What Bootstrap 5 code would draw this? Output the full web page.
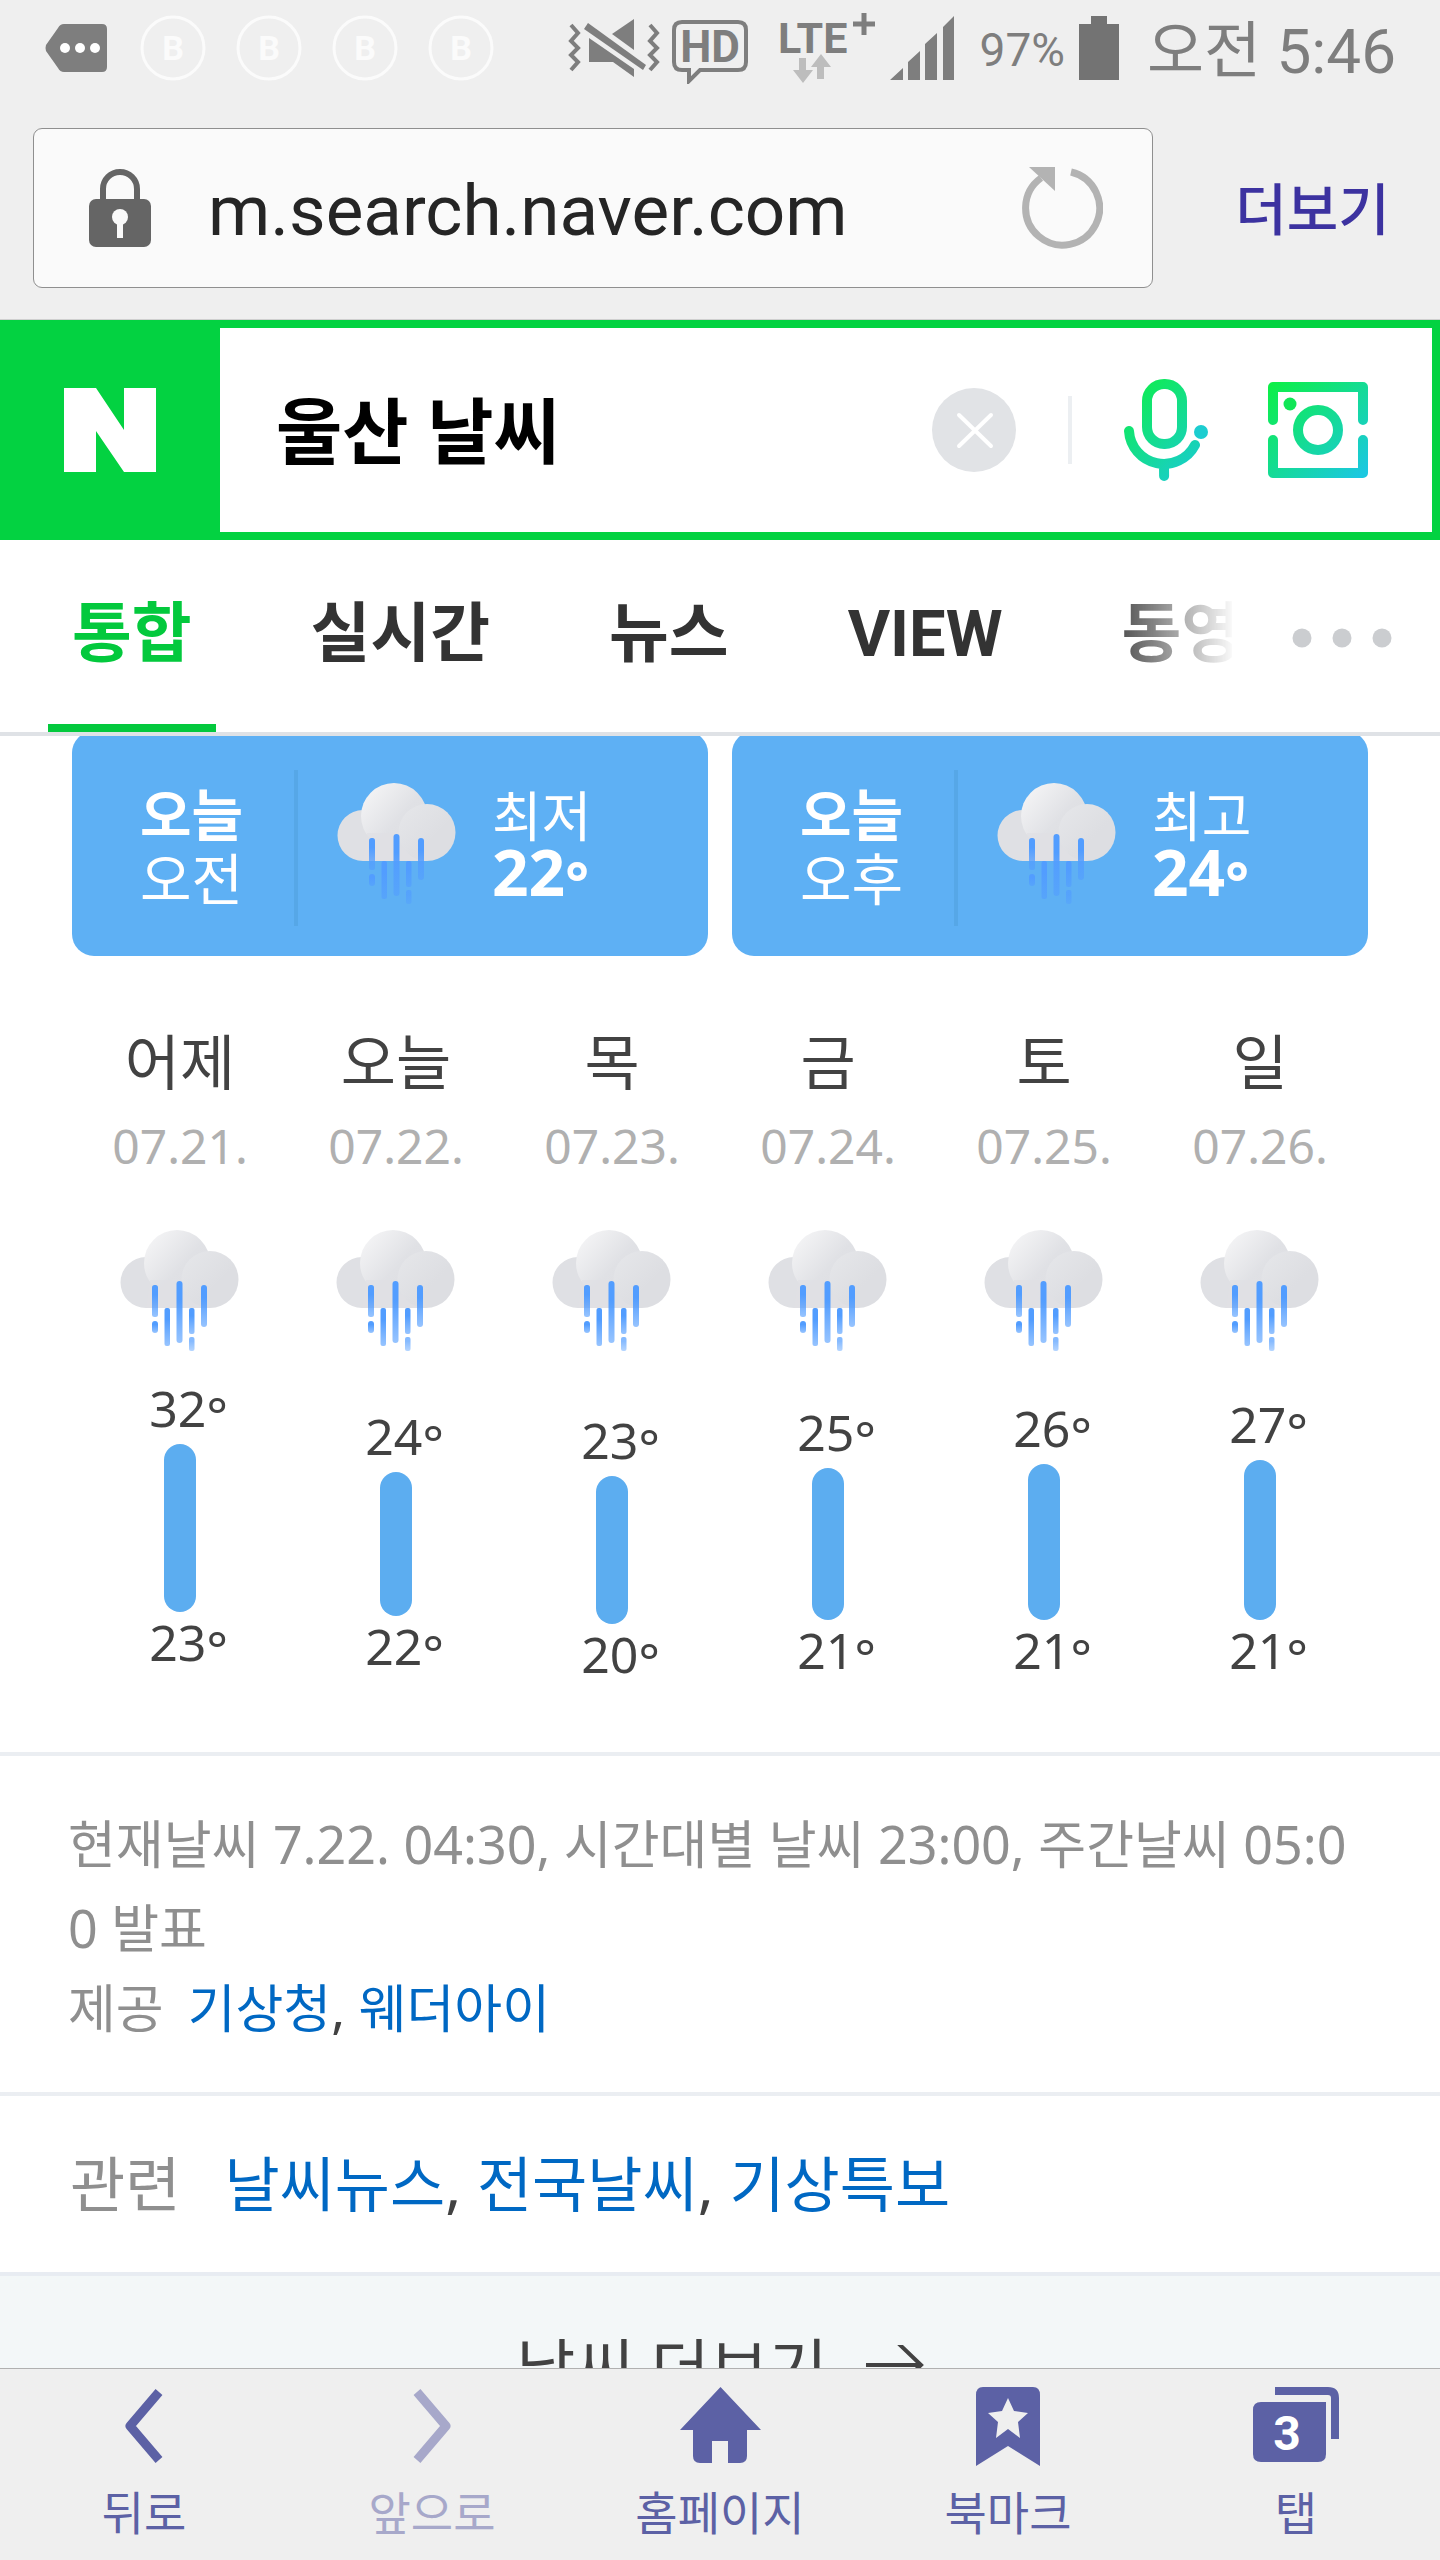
<!DOCTYPE html>
<html lang="ko">
<head>
<meta charset="utf-8">
<meta name="viewport" content="width=device-width, initial-scale=1">
<title>울산 날씨</title>
<link href="https://cdn.jsdelivr.net/npm/bootstrap@5.3.0/dist/css/bootstrap.min.css" rel="stylesheet">
<style>
  :root { --ui: Roboto, "Noto Sans CJK KR", sans-serif; --page: "Noto Sans", "Noto Sans CJK KR", sans-serif; }
  body { font-family: var(--page); color: #424242; background: #fff; }
  svg { display: block; flex-shrink: 0; }
  a { text-decoration: none; }

  /* browser chrome */
  .chrome { background: #efefef; border-bottom: 1px solid #cfcfcf; font-family: var(--ui); }
  .status { height: 96px; padding: 0 44px 0 45px; color: #7e7e7e; }
  .status-left { gap: 28px; }
  .hd-icon { margin-top: 8px; }
  .lte-icon { margin: 0 14px 0 30px; }
  .battery-level { font-size: 46px; margin: 4px 14px 0 26px; line-height: 1; }
  .clock { font-size: 62px; margin: 8px 0 0 28px; line-height: 1; }
  .address-row { padding: 32px 0 31px 33px; }
  .address { height: 160px; background: #fafafa; border: 1px solid #8f8f8f; border-radius: 9px; padding: 0 49px 0 55px; }
  .address input { font-size: 71px; color: #252525; padding: 6px 0 0 57px; line-height: 80px; }
  .more-btn { width: 287px; flex: none; padding: 6px 0 0 32px; font-size: 56px; font-weight: 500; color: #3c32a0; line-height: 80px; }
  .more-btn:hover { color: #3c32a0; }

  /* search header */
  .search { height: 220px; border: 8px solid #03d241; border-left: 0; }
  .search-logo { width: 220px; flex: none; margin: -8px 0; background: #03d241; }
  .search input { font-family: var(--page); font-size: 72px; font-weight: 700; color: #000; padding: 0 0 0 56px; line-height: 100px; }
  .search-tools { flex: none; padding-right: 64px; }
  .tool-sep { width: 4px; height: 68px; background: #eceff2; margin: 0 52px; }
  .lens-btn { margin-left: 60px; }
  .tabs { height: 196px; border-bottom: 4px solid #dfe2e6; font-family: var(--ui); }
  .tab-list { width: 1232px; gap: 71px; padding-left: 48px; -webkit-mask-image: linear-gradient(90deg, #000 1100px, transparent 1236px); mask-image: linear-gradient(90deg, #000 1100px, transparent 1236px); }
  .tab-list a { flex: none; padding: 0 24px 4px; font-size: 65px; font-weight: 700; line-height: 188px; color: #333; }
  .tab-list a.active { color: #03c93d; box-shadow: inset 0 -8px 0 #03c93d; }
  .tab-more { padding: 4px 48px 0 0; }

  /* weather */
  .halves { gap: 24px; padding: 0 72px; margin-top: -5px; }
  .half { flex: 1; height: 225px; background: #5eb0f4; color: #fff; border-radius: 22px; padding: 8px 0 0 68px; }
  .half-when { width: 154px; font-size: 56px; line-height: 64px; margin-bottom: 4px; }
  .half-when strong { font-weight: 700; }
  .half-sep { width: 4px; height: 156px; margin-right: 39px; background: #56a7e7; }
  .half-temp { font-size: 54px; line-height: 56px; margin: 0 0 8px 35px; }
  .half-temp strong { display: block; font-size: 64px; }
  .half-temp span { display: block; }
  .deg { vertical-align: -7px; line-height: 0; }
  .week { margin: 0; padding: 74px 72px 68px; list-style: none; }
  .week li { flex: 1; }
  .day { font-size: 60px; line-height: 64px; }
  .date { font-size: 48px; line-height: 60px; color: #b0b0b0; margin: 22px 0 54px; }
  .temp { font-size: 50px; line-height: 60px; padding-left: 17px; }
  .temp .deg { font-size: 50px; }
  .temp-bar { width: 32px; border-radius: 16px; background: #5cadf0; margin-top: 6px; }
  .line-top { border-top: 4px solid #ebeef2; }
  .info { padding: 46px 70px 46px 68px; font-size: 52px; color: #8f8f8f; }
  .info p { line-height: 84px; word-break: break-all; margin: 0; }
  .info .source { line-height: 76px; color: #424242; }
  .info a, .related a { color: #0068c3; }
  .source-label { color: #8f8f8f; margin-right: 24px; }
  .related { padding: 48px 70px; font-size: 60px; line-height: 80px; }
  .related-label { color: #8f8f8f; margin-right: 44px; }
  .more-link { background: #f3f7f8; border-top: 4px solid #e8ecf2; padding: 52px 0; font-size: 64px; line-height: 80px; color: #424242; gap: 38px; }

  /* toolbar */
  .toolbar { background: #efefef; border-top: 1px solid #b0b0b0; font-family: var(--ui); }
  .toolbar .btn { padding: 18px 0 16px; color: #5c61a5; font-size: 46px; line-height: 60px; border: 0; }
  .toolbar .btn:disabled { color: #a7a8ca; opacity: 1; }
  .toolbar svg { height: 79px; margin-bottom: 18px; }
</style>
</head>
<body>
<svg width="0" height="0" class="position-absolute" aria-hidden="true">
  <defs>
    <linearGradient id="puffA" x1="0" y1="0.1" x2="0.9" y2="0.9"><stop offset="0" stop-color="#f6f6f7"/><stop offset="0.6" stop-color="#e0e1e5"/><stop offset="1" stop-color="#dddee2"/></linearGradient>
    <linearGradient id="puffB" x1="0" y1="0" x2="0.6" y2="0.6"><stop offset="0" stop-color="#e6e7ea"/><stop offset="1" stop-color="#dddee2"/></linearGradient>
    <linearGradient id="drop" x1="0" y1="0" x2="0" y2="1"><stop offset="0.3" stop-color="#529dff"/><stop offset="1" stop-color="#529dff" stop-opacity="0.6"/></linearGradient>
    <linearGradient id="naver" gradientUnits="userSpaceOnUse" x1="0" y1="0" x2="90" y2="96"><stop offset="0" stop-color="#0df043"/><stop offset="1" stop-color="#1bc8e0"/></linearGradient>
    <symbol id="badge-b" viewBox="0 0 68 68"><circle cx="34" cy="34" r="31" fill="none" stroke="#fbfbfb" stroke-width="3"/><text x="34" y="46" text-anchor="middle" font-size="34" font-weight="700" fill="#fbfbfb">B</text></symbol>
    <symbol id="rain" viewBox="0 0 120 130">
      <path d="M26 27a25.500 25.500 0 0 0 0 51H90V40H40z" fill="#dfe0e4"/>
      <circle cx="57" cy="33" r="33" fill="url(#puffA)"/>
      <path d="M30 50H90V78H26z" fill="#dfe0e4" opacity="0.700"/>
      <circle cx="90" cy="49.500" r="28.500" fill="url(#puffB)"/>
      <g fill="url(#drop)"><rect x="32" y="55" width="6" height="32" rx="2.500"/><rect x="32" y="91" width="6" height="12" rx="3"/><rect x="44.500" y="78" width="5.500" height="38" rx="2"/><rect x="56.500" y="51" width="6" height="62" rx="3"/><rect x="69" y="78" width="5.500" height="26" rx="2"/><rect x="69" y="107" width="5.500" height="14" rx="2" opacity="0.700"/><rect x="81" y="55" width="6" height="42" rx="3"/></g>
    </symbol>
  </defs>
</svg>

<div class="vh-100 d-flex flex-column overflow-hidden">
  <header class="chrome">
    <div class="status d-flex align-items-center">
      <div class="status-left d-flex align-items-center">
        <svg width="66" height="48" viewBox="0 0 66 48"><path d="M19 0H57q5 0 5 5V43q0 5-5 5H19q-4 0-6-4L1 27q-1-3 0-6L13 4q2-4 6-4z" fill="#7e7e7e"/><g fill="#fff"><circle cx="20" cy="24" r="5"/><circle cx="35" cy="24" r="5"/><circle cx="50" cy="24" r="5"/></g></svg>
        <svg width="68" height="68"><use href="#badge-b"/></svg>
        <svg width="68" height="68"><use href="#badge-b"/></svg>
        <svg width="68" height="68"><use href="#badge-b"/></svg>
        <svg width="68" height="68"><use href="#badge-b"/></svg>
      </div>
      <div class="d-flex align-items-center ms-auto">
        <svg class="me-2" width="96" height="60" viewBox="0 0 96 60" role="img" aria-label="무음"><g fill="none" stroke="#7e7e7e" stroke-width="4"><path id="zig" d="M3 7L10 15L3 23L10 30L3 37L10 44L3 52"/><use href="#zig" x="79"/></g><g fill="#7e7e7e"><path d="M44 16L66 1V32z"/><path d="M21 20V44H45L66 59V51z"/><path d="M20 5L78 47L75 52L16 11z"/></g></svg>
        <svg class="hd-icon" width="76" height="64" viewBox="0 0 76 64"><path d="M10 2H66q8 0 8 8V42q0 8-8 8H28L17 61V50H10q-8 0-8-8V10q0-8 8-8z" fill="none" stroke="#7e7e7e" stroke-width="4"/><text x="38" y="42" text-anchor="middle" font-size="44" font-weight="700" fill="#7e7e7e">HD</text></svg>
        <svg class="lte-icon" width="98" height="72" viewBox="0 0 98 72"><text x="0" y="41" font-size="43" font-weight="700" fill="#7e7e7e">LTE</text><path d="M86 1V23M75 12H97" stroke="#7e7e7e" stroke-width="5"/><path d="M21 46V58H15L25 71L35 58H28V46zM39 67V55H33L43 42L53 55H46V67z" fill="#bdbdbd"/></svg>
        <svg width="64" height="64" viewBox="0 0 64 64"><path d="M0 64L13 52V64zM18 46L30 35V64H18zM35 28L47 17V64H35zM53 11L64 0V64H53z" fill="#7e7e7e"/></svg>
        <span class="battery-level">97%</span>
        <svg width="40" height="64" viewBox="0 0 40 64"><path d="M0 8H12V0H28V8H40V64H0z" fill="#737373"/></svg>
        <span class="clock">오전 5:46</span>
      </div>
    </div>
    <div class="address-row d-flex align-items-center">
      <div class="address d-flex align-items-center flex-grow-1">
        <svg width="62" height="78" viewBox="0 0 62 78"><path d="M14 32V20a17 17 0 0 1 34 0V32" fill="none" stroke="#656565" stroke-width="6"/><rect y="30" width="62" height="48" rx="7" fill="#656565"/><circle cx="31" cy="48" r="8" fill="#fafafa"/><path d="M31 50V69" stroke="#fafafa" stroke-width="6"/></svg>
        <input class="form-control border-0 bg-transparent shadow-none" type="text" value="m.search.naver.com" aria-label="주소">
        <button class="btn p-0 border-0" type="button" aria-label="새로고침"><svg width="82" height="84" viewBox="0 0 82 84"><path d="M50 6A37 37 0 1 1 20 12" fill="none" stroke="#b3b3b3" stroke-width="7"/><path d="M8 1H34V25z" fill="#b3b3b3"/></svg></button>
      </div>
      <button class="more-btn btn border-0" type="button">더보기</button>
    </div>
  </header>

  <form class="search d-flex flex-shrink-0" role="search" onsubmit="return false">
    <a class="search-logo d-flex align-items-center justify-content-center" href="#" aria-label="네이버"><svg width="92" height="84" viewBox="0 0 92 84"><path d="M0 0H32L60 42V0H92V84H60L32 43V84H0z" fill="#fff"/></svg></a>
    <input class="form-control border-0 shadow-none flex-grow-1" type="text" value="울산 날씨" aria-label="검색어">
    <div class="search-tools d-flex align-items-center">
      <button class="btn p-0 border-0" type="reset" aria-label="지우기"><svg width="84" height="84" viewBox="0 0 84 84"><circle cx="42" cy="42" r="42" fill="#e1e3e6"/><path d="M27 27L59 58M59 27L27 58" stroke="#fff" stroke-width="4" stroke-linecap="round"/></svg></button>
      <div class="tool-sep"></div>
      <button class="btn p-0 border-0" type="button" aria-label="음성검색"><svg width="84" height="102" viewBox="0 0 84 102"><g fill="none" stroke="url(#naver)" stroke-width="10" stroke-linecap="round"><rect x="23" y="5" width="35" height="60" rx="17"/><path d="M5 52A35 35 0 0 0 71 66M40 86L40.100 97"/></g><circle cx="77" cy="53" r="7" fill="#1ccdd0"/></svg></button>
      <button class="lens-btn btn p-0 border-0" type="button" aria-label="렌즈"><svg width="100" height="96" viewBox="0 0 100 96"><g fill="none" stroke="url(#naver)" stroke-width="10" stroke-linecap="round" stroke-linejoin="round"><path d="M5 38V5H95V38M5 58V91H95V58"/><circle cx="50" cy="48" r="20"/></g><circle cx="22" cy="22" r="6.500" fill="#11e656"/></svg></button>
    </div>
  </form>

  <div class="tabs d-flex flex-shrink-0 align-items-center justify-content-between">
    <nav class="tab-list d-flex overflow-hidden" aria-label="검색 탭">
      <a class="active" href="#">통합</a><a href="#">실시간</a><a href="#">뉴스</a><a href="#">VIEW</a><a href="#">동영상</a>
    </nav>
    <button class="tab-more btn border-0" type="button" aria-label="탭 더보기"><svg width="100" height="20" viewBox="0 0 100 20" fill="#cbcdd0"><circle cx="10" cy="10" r="9.500"/><circle cx="50" cy="10" r="9.500"/><circle cx="90" cy="10" r="9.500"/></svg></button>
  </div>

  <main class="flex-grow-1 overflow-hidden">
    <section class="halves d-flex">
      <div class="half d-flex align-items-center">
        <div class="half-when"><strong>오늘</strong><br>오전</div><div class="half-sep"></div>
        <svg width="120" height="130"><use href="#rain"/></svg>
        <div class="half-temp"><span>최저</span><strong>22<small class="deg">°</small></strong></div>
      </div>
      <div class="half d-flex align-items-center">
        <div class="half-when"><strong>오늘</strong><br>오후</div><div class="half-sep"></div>
        <svg width="120" height="130"><use href="#rain"/></svg>
        <div class="half-temp"><span>최고</span><strong>24<small class="deg">°</small></strong></div>
      </div>
    </section>

    <ul class="week d-flex">
      <li class="d-flex flex-column align-items-center"><span class="day">어제</span><span class="date">07.21.</span><svg width="120" height="130"><use href="#rain"/></svg><span class="temp" style="margin-top:18px">32<small class="deg">°</small></span><div class="temp-bar" style="height:168px"></div><span class="temp">23<small class="deg">°</small></span></li>
      <li class="d-flex flex-column align-items-center"><span class="day">오늘</span><span class="date">07.22.</span><svg width="120" height="130"><use href="#rain"/></svg><span class="temp" style="margin-top:46px">24<small class="deg">°</small></span><div class="temp-bar" style="height:144px"></div><span class="temp">22<small class="deg">°</small></span></li>
      <li class="d-flex flex-column align-items-center"><span class="day">목</span><span class="date">07.23.</span><svg width="120" height="130"><use href="#rain"/></svg><span class="temp" style="margin-top:50px">23<small class="deg">°</small></span><div class="temp-bar" style="height:148px"></div><span class="temp">20<small class="deg">°</small></span></li>
      <li class="d-flex flex-column align-items-center"><span class="day">금</span><span class="date">07.24.</span><svg width="120" height="130"><use href="#rain"/></svg><span class="temp" style="margin-top:42px">25<small class="deg">°</small></span><div class="temp-bar" style="height:152px"></div><span class="temp">21<small class="deg">°</small></span></li>
      <li class="d-flex flex-column align-items-center"><span class="day">토</span><span class="date">07.25.</span><svg width="120" height="130"><use href="#rain"/></svg><span class="temp" style="margin-top:38px">26<small class="deg">°</small></span><div class="temp-bar" style="height:156px"></div><span class="temp">21<small class="deg">°</small></span></li>
      <li class="d-flex flex-column align-items-center"><span class="day">일</span><span class="date">07.26.</span><svg width="120" height="130"><use href="#rain"/></svg><span class="temp" style="margin-top:34px">27<small class="deg">°</small></span><div class="temp-bar" style="height:160px"></div><span class="temp">21<small class="deg">°</small></span></li>
    </ul>

    <section class="info line-top">
      <p>현재날씨 7.22. 04:30, 시간대별 날씨 23:00, 주간날씨 05:00 발표</p>
      <div class="source"><span class="source-label">제공</span><a href="#">기상청</a>, <a href="#">웨더아이</a></div>
    </section>
    <section class="related line-top"><span class="related-label">관련</span><a href="#">날씨뉴스</a>, <a href="#">전국날씨</a>, <a href="#">기상특보</a></section>
    <a class="more-link d-flex justify-content-center align-items-center" href="#">날씨 더보기<svg width="58" height="46" viewBox="0 0 58 46"><path d="M0 20H55M32 -2L55 20L32 42" fill="none" stroke="#424242" stroke-width="4"/></svg></a>
  </main>

  <nav class="toolbar d-flex flex-shrink-0" aria-label="브라우저 도구">
    <button class="btn col d-flex flex-column align-items-center" type="button"><svg width="40" viewBox="0 0 40 79"><path d="M35 5L6 39L35 73" fill="none" stroke="currentColor" stroke-width="9" stroke-linejoin="round"/></svg>뒤로</button>
    <button class="btn col d-flex flex-column align-items-center" type="button" disabled><svg width="40" viewBox="0 0 40 79"><path d="M5 5L34 39L5 73" fill="none" stroke="currentColor" stroke-width="9" stroke-linejoin="round"/></svg>앞으로</button>
    <button class="btn col d-flex flex-column align-items-center" type="button"><svg width="81" viewBox="0 0 81 79"><path d="M40.500 0L81 43H67V69q0 7-7 7H48V54H32V76H20q-7 0-7-7V43H0z" fill="currentColor"/></svg>홈페이지</button>
    <button class="btn col d-flex flex-column align-items-center" type="button"><svg width="64" viewBox="0 0 64 79"><path d="M7 0H57q7 0 7 8V79L32 59L0 79V8q0-8 7-8z" fill="currentColor"/><path d="M32 11L38 24L52 26L42 35L44 51L32 42L20 51L22 35L12 26L26 24z" fill="#efefef"/></svg>북마크</button>
    <button class="btn col d-flex flex-column align-items-center" type="button"><svg width="86" viewBox="0 0 86 79"><path d="M8 15H73V67q0 8-8 8H8q-8 0-8-8V23q0-8 8-8z" fill="currentColor"/><path d="M22 4H75q7 0 7 7V52" fill="none" stroke="currentColor" stroke-width="8"/><text x="34" y="63" text-anchor="middle" font-size="48" font-weight="700" fill="#fff">3</text></svg>탭</button>
  </nav>
</div>
<script src="https://cdn.jsdelivr.net/npm/bootstrap@5.3.0/dist/js/bootstrap.bundle.min.js"></script>
</body>
</html>
